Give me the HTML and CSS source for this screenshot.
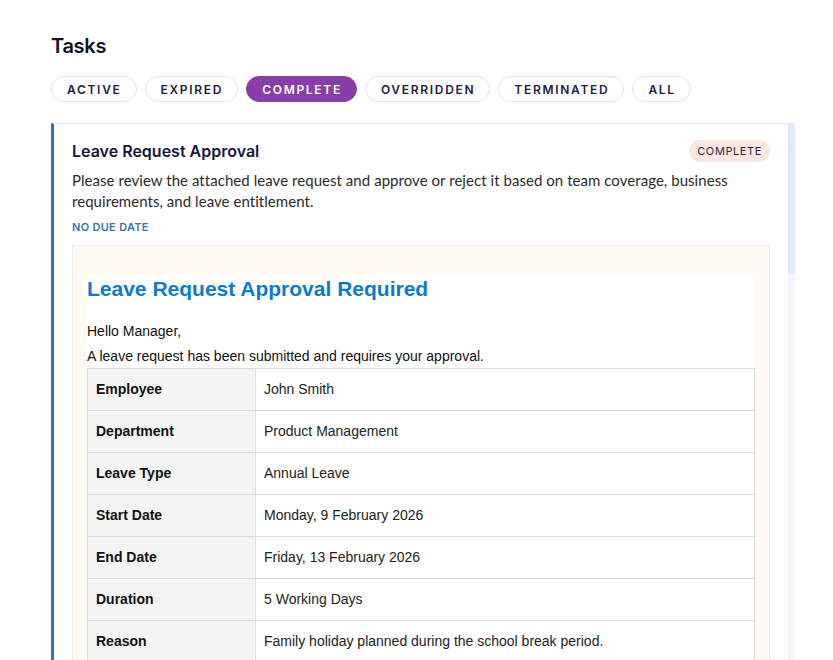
FILE: index.html
```html
<!DOCTYPE html>
<html lang="en">
<head>
<meta charset="utf-8">
<title>Tasks</title>
<link rel="stylesheet" href="styles.css">
</head>
<body>
<main class="page">
  <h1 class="page-title">Tasks</h1>
  <nav class="filters">
    <button class="pill">ACTIVE</button>
    <button class="pill">EXPIRED</button>
    <button class="pill pill-active">COMPLETE</button>
    <button class="pill">OVERRIDDEN</button>
    <button class="pill">TERMINATED</button>
    <button class="pill">ALL</button>
  </nav>
  <section class="card">
    <div class="card-body">
      <div class="card-head">
        <h2 class="card-title">Leave Request Approval</h2>
        <span class="badge">COMPLETE</span>
      </div>
      <p class="card-desc">Please review the attached leave request and approve or reject it based on team coverage, business requirements, and leave entitlement.</p>
      <div class="due">NO DUE DATE</div>
      <div class="email">
        <div class="email-inner">
          <h3 class="email-title">Leave Request Approval Required</h3>
          <p class="email-greet">Hello Manager,</p>
          <p class="email-text">A leave request has been submitted and requires your approval.</p>
          <table class="details">
            <tr><th>Employee</th><td>John Smith</td></tr>
            <tr><th>Department</th><td>Product Management</td></tr>
            <tr><th>Leave Type</th><td>Annual Leave</td></tr>
            <tr><th>Start Date</th><td>Monday, 9 February 2026</td></tr>
            <tr><th>End Date</th><td>Friday, 13 February 2026</td></tr>
            <tr><th>Duration</th><td>5 Working Days</td></tr>
            <tr><th>Reason</th><td>Family holiday planned during the school break period.</td></tr>
          </table>
        </div>
      </div>
    </div>
    <div class="scrollbar"><div class="thumb"></div></div>
  </section>
</main>
</body>
</html>
```
FILE: styles.css
```css
html, body {
  margin: 0;
  padding: 0;
  background: #ffffff;
  height: 660px;
  overflow: hidden;
}
body {
  font-family: "Lato", "Inter", sans-serif;
  color: #1d1d35;
}
.page {
  padding: 0 38px 0 51px;
}
.page-title {
  margin: 0;
  padding-top: 33px;
  font-family: "Inter", sans-serif;
  font-size: 20px;
  line-height: 26px;
  font-weight: 600;
  letter-spacing: -0.3px;
  color: #111122;
}
.filters {
  display: flex;
  gap: 8px;
  margin-top: 17px;
}
.pill {
  height: 26px;
  padding: 0 14px 0 15px;
  border: 1px solid #ecd9f3;
  border-radius: 13px;
  background: #fff;
  font-family: "Inter", sans-serif;
  font-size: 12px;
  font-weight: 600;
  letter-spacing: 1.7px;
  color: #22203c;
  cursor: pointer;
}
.pill-active {
  background: #883ea6;
  border-color: #883ea6;
  color: #ffffff;
}
.card {
  margin-top: 21px;
  display: flex;
  border-left: 3px solid #3a6fbf;
  border-top: 1px solid #e2e9f4;
  height: 600px;
}
.card-body {
  flex: 1;
  padding: 16px 18px 0 18px;
  min-width: 0;
}
.scrollbar {
  width: 7px;
  background: #f4f6fa;
}
.thumb {
  height: 150px;
  background: #e1ebf8;
  border-radius: 0 0 2px 2px;
}
.card-head {
  display: flex;
  align-items: center;
  justify-content: space-between;
}
.card-title {
  margin: 0;
  font-family: "Inter", sans-serif;
  font-size: 16px;
  line-height: 22px;
  font-weight: 600;
  letter-spacing: 0px;
  color: #15163a;
}
.badge {
  height: 22px;
  line-height: 22px;
  padding: 0 8px;
  border-radius: 11px;
  background: #fde7e3;
  font-family: "Inter", sans-serif;
  font-size: 11px;
  letter-spacing: 0.6px;
  color: #2a2a3a;
}
.card-desc {
  margin: 8px 0 0;
  font-size: 15px;
  line-height: 21px;
  letter-spacing: 0.05px;
  color: #2b2b2b;
}
.due {
  margin-top: 7px;
  font-family: "Inter", sans-serif;
  font-size: 11px;
  line-height: 16px;
  font-weight: 600;
  letter-spacing: 0.3px;
  color: #3f70b6;
}
.email {
  margin-top: 10px;
  border: 1px solid #efefef;
  background: #fffaf4;
  padding: 29px 14px 0;
}
.email-inner {
  background: #ffffff;
  font-family: "Liberation Sans", Arial, sans-serif;
  font-size: 14px;
  color: #111111;
}
.email-title {
  margin: 0;
  padding-top: 2px;
  font-size: 21px;
  line-height: 23px;
  font-weight: bold;
  color: #0a7bcd;
}
.email-greet {
  margin: 23px 0 0;
  line-height: 16px;
}
.email-text {
  margin: 9px 0 0;
  line-height: 16px;
}
.details {
  margin-top: 4px;
  width: 100%;
  border-collapse: collapse;
  border: 1px solid #dddddd;
}
.details th,
.details td {
  height: 40px;
  border: 1px solid #dddddd;
  font-size: 14px;
  text-align: left;
  vertical-align: middle;
  padding: 0 8px 1px;
}
.details th {
  width: 151px;
  background: #f4f4f4;
  font-weight: bold;
  color: #111;
}
.details td {
  color: #222;
}
```
